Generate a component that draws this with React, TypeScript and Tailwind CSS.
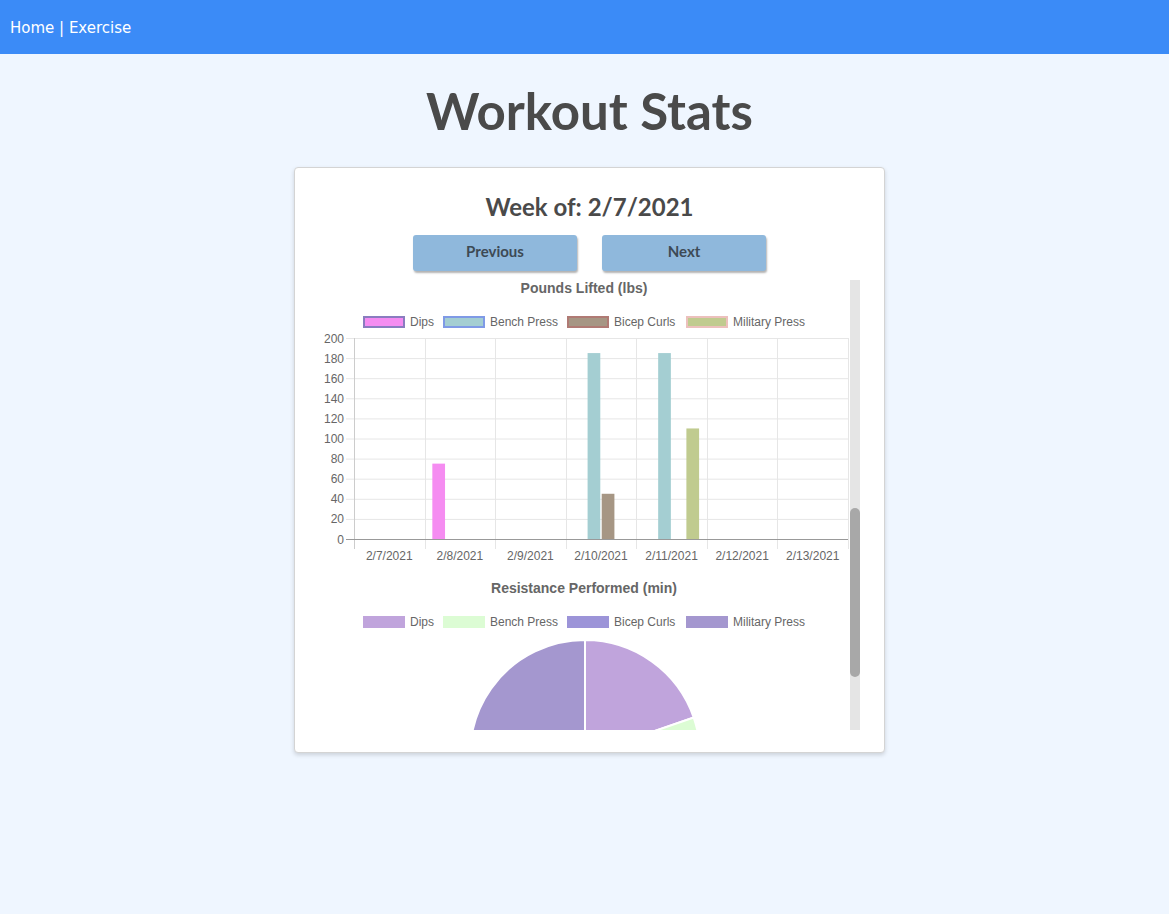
import React from 'react';

const days = ['2/7/2021', '2/8/2021', '2/9/2021', '2/10/2021', '2/11/2021', '2/12/2021', '2/13/2021'];

const barSets = [
  { label: 'Dips', fill: '#f58cf1', border: '#8a7cc0', data: [0, 75, 0, 0, 0, 0, 0] },
  { label: 'Bench Press', fill: '#a4ced2', border: '#7f9ae6', data: [0, 0, 0, 185, 185, 0, 0] },
  { label: 'Bicep Curls', fill: '#a69684', border: '#b07a74', data: [0, 0, 0, 45, 0, 0, 0] },
  { label: 'Military Press', fill: '#c0cb8f', border: '#ecc0bc', data: [0, 0, 0, 0, 110, 0, 0] },
];

const pieSets = [
  { label: 'Dips', fill: '#c0a4dc', value: 71 },
  { label: 'Bench Press', fill: '#dcfcd4', value: 10 },
  { label: 'Bicep Curls', fill: '#9c94d8', value: 60 },
  { label: 'Military Press', fill: '#a497cf', value: 219 },
];

const legendX = [45, 125, 249, 368];

// plot geometry
const left = 36;
const right = 530;
const top = 58;
const bottom = 259;
const colW = (right - left) / 7;
const yOf = (v: number) => bottom - (v / 200) * (bottom - top);

const Legend: React.FC<{ y: number; items: { label: string; fill: string; border?: string }[] }> = ({ y, items }) => (
  <g>
    {items.map((it, i) => (
      <g key={it.label}>
        <rect x={legendX[i] + 1} y={y - 5} width={40} height={10} fill={it.fill} stroke={it.border ?? it.fill} strokeWidth={2} />
        <text x={legendX[i] + 47} y={y + 4} fontSize={12} fill="#666">
          {it.label}
        </text>
      </g>
    ))}
  </g>
);

function slicePath(cx: number, cy: number, r: number, a0: number, a1: number) {
  const p = (a: number) => [cx + r * Math.sin((a * Math.PI) / 180), cy - r * Math.cos((a * Math.PI) / 180)];
  const [x0, y0] = p(a0);
  const [x1, y1] = p(a1);
  const large = a1 - a0 > 180 ? 1 : 0;
  return `M${cx},${cy} L${x0},${y0} A${r},${r} 0 ${large} 1 ${x1},${y1} Z`;
}

const Charts: React.FC = () => {
  let angle = 0;
  return (
    <svg width={532} height={450} style={{ fontFamily: '"Liberation Sans", Arial, sans-serif' }}>
      {/* bar chart */}
      <text x={266} y={13} textAnchor="middle" fontSize={14} fontWeight="bold" fill="#666">
        Pounds Lifted (lbs)
      </text>
      <Legend y={42} items={barSets} />
      {Array.from({ length: 11 }).map((_, i) => {
        const y = yOf(i * 20) + 0.5;
        return (
          <g key={i}>
            <line x1={left - 8} x2={right} y1={y} y2={y} stroke={i === 0 ? '#999' : '#e6e6e6'} />
            <text x={left - 10} y={y + 4} textAnchor="end" fontSize={12} fill="#666">
              {i * 20}
            </text>
          </g>
        );
      })}
      {Array.from({ length: 8 }).map((_, i) => {
        const x = Math.round(left + i * colW) + 0.5;
        return <line key={i} x1={x} x2={x} y1={top} y2={bottom + 10} stroke={i === 0 ? '#ccc' : '#e6e6e6'} />;
      })}
      <line x1={left - 8} x2={right} y1={bottom + 0.5} y2={bottom + 0.5} stroke="#999" />
      {barSets.map((ds, di) =>
        ds.data.map((v, ci) => {
          if (!v) return null;
          const slot = (colW * 0.8) / 4;
          const x = left + ci * colW + colW * 0.1 + slot * di + slot * 0.05;
          return <rect key={di + '-' + ci} x={x} y={yOf(v)} width={slot * 0.9} height={bottom - yOf(v)} fill={ds.fill} />;
        })
      )}
      {days.map((d, i) => (
        <text key={d} x={left + i * colW + colW / 2} y={280} textAnchor="middle" fontSize={12} fill="#666">
          {d}
        </text>
      ))}

      {/* pie chart */}
      <text x={266} y={313} textAnchor="middle" fontSize={14} fontWeight="bold" fill="#666">
        Resistance Performed (min)
      </text>
      <Legend y={342} items={pieSets} />
      {pieSets.map((s) => {
        const a0 = angle;
        angle += s.value;
        return <path key={s.label} d={slicePath(267, 475, 115, a0, angle)} fill={s.fill} stroke="#fff" strokeWidth={2} />;
      })}
    </svg>
  );
};

export default function App() {
  return (
    <div className="min-h-[914px] bg-[#eff6ff]">
      <nav className="h-[54px] bg-[#3b8bf7] flex items-center px-[10px] pt-[2px]">
        <span className="text-white text-[15px] font-['DejaVu_Sans',sans-serif]">
          Home | Exercise
        </span>
      </nav>

      <main className="pl-[10px]">
        <h1 className="mt-[26px] text-center text-[51px] leading-[62px] font-bold text-[#4a4a4a] font-['Lato',sans-serif]">
          Workout Stats
        </h1>

        <div className="mx-auto mt-[25px] w-[591px] bg-white border border-[#d4d4d4] rounded-[4px] shadow-[0_2px_4px_rgba(0,0,0,0.15)] pt-[24px] pb-[22px] font-['Lato',sans-serif]">
          <h2 className="text-center text-[24px] leading-[30px] font-bold text-[#4a4a4a]">Week of: 2/7/2021</h2>

          <div className="mt-[13px] flex justify-center gap-[25px]">
            <button className="w-[164px] h-[36px] pb-[3px] rounded-[3px] bg-[#8fb8dc] text-[15px] font-bold text-[#3d4a55] shadow-[1px_2px_2px_rgba(0,0,0,0.3)]">
              Previous
            </button>
            <button className="w-[164px] h-[36px] pb-[3px] rounded-[3px] bg-[#8fb8dc] text-[15px] font-bold text-[#3d4a55] shadow-[1px_2px_2px_rgba(0,0,0,0.3)]">
              Next
            </button>
          </div>

          <div className="ml-[23px] mt-[9px] w-[542px] h-[450px] flex">
            <div className="w-[532px] h-[450px] overflow-hidden">
              <Charts />
            </div>
            <div className="w-[10px] h-[450px] bg-[#e5e5e5] flex flex-col">
              <div className="mt-[228px] h-[169px] rounded-full bg-[#a8a8a8]" />
            </div>
          </div>
        </div>
      </main>
    </div>
  );
}
